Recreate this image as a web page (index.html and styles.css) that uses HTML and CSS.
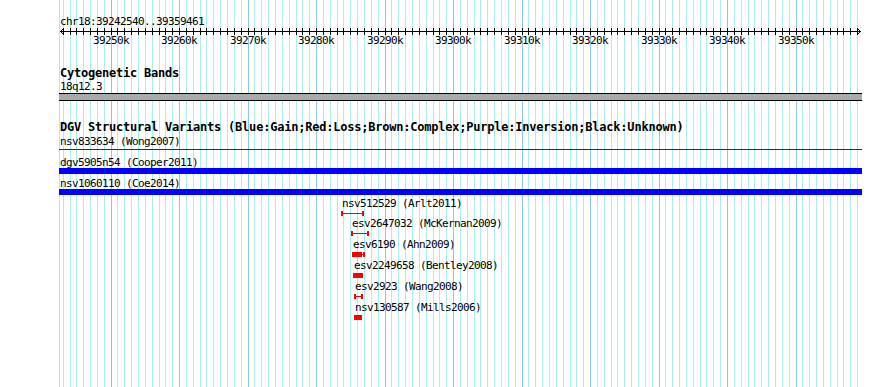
FILE: index.html
```html
<!DOCTYPE html>
<html>
    <head>
      <meta charset="utf-8">
      <title>chr18:39242540..39359461</title>
      <link rel="stylesheet" href="styles.css">
    </head>

    <body>
        <div class="panel">
            <svg class="grid" id="grid" width="803" height="387"></svg>
            <div class="tracks">
                <div class="range">chr18:39242540..39359461</div>
                <div class="ruler">
                    <svg class="ruler_axis" id="rulerAxis" width="803" height="7"></svg>
                    <span class="tick_label" style="left:34px">39250k</span>
                    <span class="tick_label" style="left:102px">39260k</span>
                    <span class="tick_label" style="left:171px">39270k</span>
                    <span class="tick_label" style="left:239px">39280k</span>
                    <span class="tick_label" style="left:308px">39290k</span>
                    <span class="tick_label" style="left:376px">39300k</span>
                    <span class="tick_label" style="left:445px">39310k</span>
                    <span class="tick_label" style="left:513px">39320k</span>
                    <span class="tick_label" style="left:582px">39330k</span>
                    <span class="tick_label" style="left:650px">39340k</span>
                    <span class="tick_label" style="left:719px">39350k</span>
                </div>

                <div class="track_title">Cytogenetic Bands</div>
                <div class="feat_label">18q12.3</div>
                <div class="band"></div>

                <div class="track_title dgv_title">DGV Structural Variants (Blue:Gain;Red:Loss;Brown:Complex;Purple:Inversion;Black:Unknown)</div>
                <div class="wide_row first_row">
                    <div class="feat_label">nsv833634 (Wong2007)</div>
                    <div class="thin_bar"></div>
                </div>
                <div class="wide_row after_thin">
                    <div class="feat_label">dgv5905n54 (Cooper2011)</div>
                    <div class="gain_bar"></div>
                </div>
                <div class="wide_row">
                    <div class="feat_label">nsv1060110 (Coe2014)</div>
                    <div class="gain_bar"></div>
                </div>

                <div class="loss_row">
                    <div class="feat_label" style="margin-left:282px">nsv512529 (Arlt2011)</div>
                    <div class="loss_span" style="margin-left:282px;width:23px"></div>
                </div>
                <div class="loss_row tight">
                    <div class="feat_label" style="margin-left:292px">esv2647032 (McKernan2009)</div>
                    <div class="loss_span" style="margin-left:292px;width:18px"></div>
                </div>
                <div class="loss_row">
                    <div class="feat_label" style="margin-left:293px">esv6190 (Ahn2009)</div>
                    <div class="loss_span" style="margin-left:293px;width:13px">
                        <div class="loss_block" style="width:10px"></div>
                    </div>
                </div>
                <div class="loss_row">
                    <div class="feat_label" style="margin-left:294px">esv2249658 (Bentley2008)</div>
                    <div class="loss_block" style="margin-left:294px;width:10px"></div>
                </div>
                <div class="loss_row">
                    <div class="feat_label" style="margin-left:295px">esv2923 (Wang2008)</div>
                    <div class="loss_span" style="margin-left:295px;width:9px"></div>
                </div>
                <div class="loss_row">
                    <div class="feat_label" style="margin-left:295px">nsv130587 (Mills2006)</div>
                    <div class="loss_block" style="margin-left:295px;width:8px"></div>
                </div>
            </div>
        </div>

      <script>
        (function(){
            var ns = 'http://www.w3.org/2000/svg',
                $grid = document.getElementById('grid'),
                $axis = document.getElementById('rulerAxis');
            var start = 39242540, bpPerPx = 146,
                k, x;

            function addLine(svg, x1, y1, x2, y2, color){
                var el = document.createElementNS(ns, 'line');
                el.setAttribute('x1', x1);
                el.setAttribute('y1', y1);
                el.setAttribute('x2', x2);
                el.setAttribute('y2', y2);
                el.setAttribute('stroke', color);
                svg.appendChild(el);
            }
            function addHead(points){
                var el = document.createElementNS(ns, 'polyline');
                el.setAttribute('points', points);
                el.setAttribute('fill', 'none');
                el.setAttribute('stroke', '#000');
                $axis.appendChild(el);
            }

            // 每1k一条网格线, 每10k颜色深一点
            addLine($grid, 0.5, 0, 0.5, 387, '#aaeeee');
            for (k = 39243; k <= 39359; k++) {
                x = Math.floor(1 + (k * 1000 - start) / bpPerPx) + 0.5;
                addLine($grid, x, 0, x, 387, k % 10 === 0 ? '#88c8e8' : '#aaeeee');
                addLine($axis, x, 0, x, 7, '#000');
            }
            // 标尺横线和两端箭头
            addLine($axis, 1, 3.5, 802, 3.5, '#000');
            addHead('4.5,0.5 1.5,3.5 4.5,6.5');
            addHead('798.5,0.5 801.5,3.5 798.5,6.5');
        })();
      </script>
    </body>
</html>
```

FILE: styles.css
```css
html, body{
    margin: 0;
    padding: 0;
    background-color: #fff;
}
body{
    width: 890px;
    height: 387px;
    overflow: hidden;
    color: #000;
    font-family: "DejaVu Sans Mono", "Liberation Mono", monospace;
    font-size: 11px;
    letter-spacing: -0.62px;
    line-height: 13px;
}
.panel{
    position: relative;
    width: 803px;
    height: 387px;
    margin-left: 59px;
}
.panel .grid{
    position: absolute;
    top: 0px;
    left: 0px;
    shape-rendering: crispEdges;
}
.tracks{
    position: relative;
    z-index: 1;
}
.range{
    padding-left: 1px;
    padding-top: 15px;
    white-space: nowrap;
}
.ruler{
    position: relative;
    height: 22px;
}
.ruler_axis{
    display: block;
    shape-rendering: crispEdges;
}
.ruler .tick_label{
    position: absolute;
    top: 6px;
    white-space: nowrap;
}
.track_title{
    margin-top: 17px;
    padding-left: 1px;
    font-size: 12px;
    font-weight: bold;
    letter-spacing: -0.22px;
    white-space: nowrap;
}
.dgv_title{
    margin-top: 20px;
}
.feat_label{
    padding-left: 1px;
    white-space: nowrap;
}
.band{
    height: 6px;
    border-top: 1px solid #000;
    border-bottom: 1px solid #000;
    background-color: #aaa;
}
.wide_row{
    padding-top: 3px;
}
.wide_row.first_row{
    padding-top: 1px;
}
.wide_row.after_thin{
    padding-top: 6px;
}
.thin_bar{
    height: 1px;
    margin-top: 1px;
    background-color: #2020a0;
}
.gain_bar{
    height: 6px;
    margin-top: -1px;
    background-color: #00f;
}
.loss_row{
    padding-top: 2px;
}
.loss_row.tight{
    padding-top: 1px;
}
.loss_span,
.loss_block{
    height: 5px;
    margin-top: 1px;
    box-sizing: border-box;
}
.loss_span{
    border-left: 2px solid #f00;
    border-right: 2px solid #f00;
    background: linear-gradient(#f00, #f00) center / 100% 1px no-repeat;
}
.loss_block{
    background-color: #f00;
}
.loss_span .loss_block{
    margin: 0 0 0 -2px;
}
```
